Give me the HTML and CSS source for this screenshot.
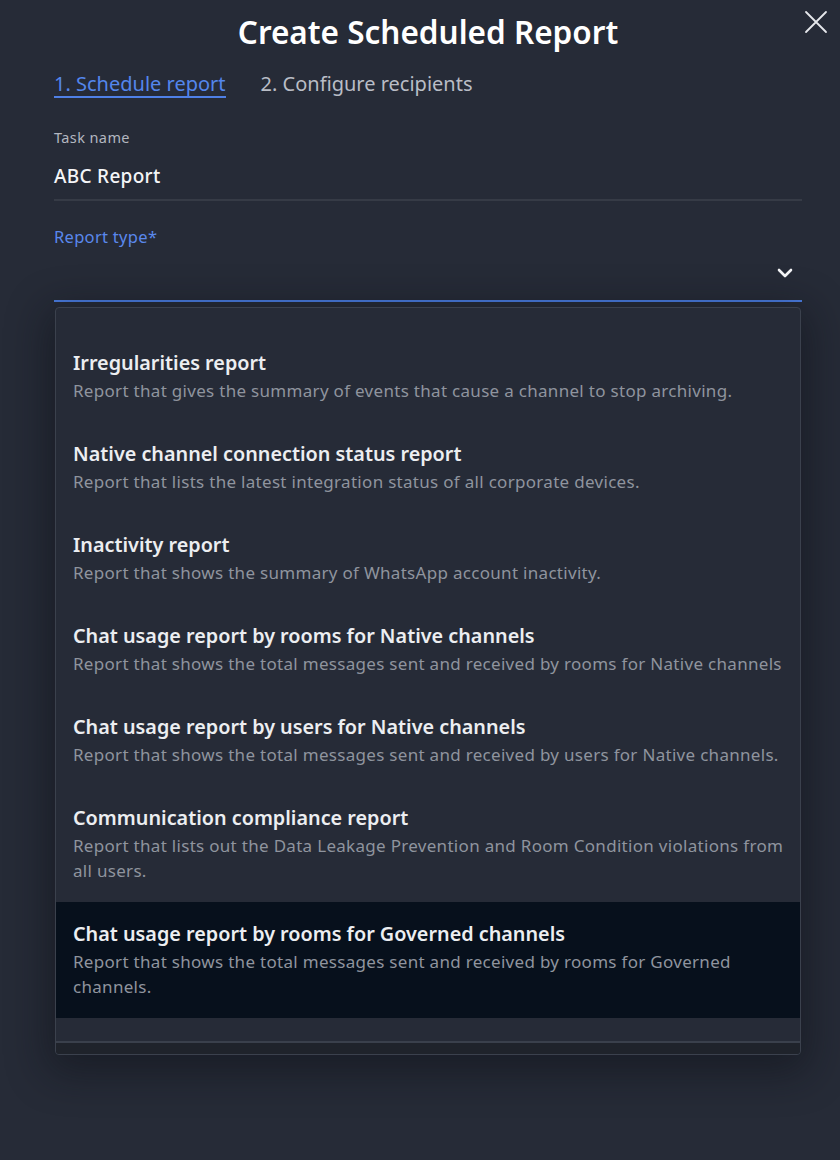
FILE: index.html
```html
<!DOCTYPE html>
<html lang="en">
<head>
<meta charset="utf-8">
<title>Create Scheduled Report</title>
<link rel="stylesheet" href="styles.css">
</head>
<body>
<div class="modal">
  <button class="close" aria-label="Close">
    <svg width="26" height="26" viewBox="0 0 26 26"><path d="M3 3 L23 23 M23 3 L3 23" stroke="#e6e8ec" stroke-width="1.8" fill="none" stroke-linecap="round"/></svg>
  </button>
  <h1 class="title">Create Scheduled Report</h1>
  <div class="tabs">
    <span class="tab active">1. Schedule report</span>
    <span class="tab">2. Configure recipients</span>
  </div>

  <div class="field">
    <div class="label">Task name</div>
    <div class="value">ABC Report</div>
  </div>

  <div class="field select">
    <div class="label blue">Report type*</div>
    <div class="select-row">
      <svg width="16" height="10" viewBox="0 0 16 10"><path d="M2 2 L8 8 L14 2" stroke="#f2f3f5" stroke-width="2.6" fill="none" stroke-linecap="round" stroke-linejoin="round"/></svg>
    </div>
  </div>

  <div class="dropdown">
    <ul class="options">
      <li class="option">
        <div class="opt-title">Irregularities report</div>
        <div class="opt-desc">Report that gives the summary of events that cause a channel to stop archiving.</div>
      </li>
      <li class="option">
        <div class="opt-title">Native channel connection status report</div>
        <div class="opt-desc">Report that lists the latest integration status of all corporate devices.</div>
      </li>
      <li class="option">
        <div class="opt-title">Inactivity report</div>
        <div class="opt-desc">Report that shows the summary of WhatsApp account inactivity.</div>
      </li>
      <li class="option">
        <div class="opt-title">Chat usage report by rooms for Native channels</div>
        <div class="opt-desc">Report that shows the total messages sent and received by rooms for Native channels</div>
      </li>
      <li class="option">
        <div class="opt-title">Chat usage report by users for Native channels</div>
        <div class="opt-desc">Report that shows the total messages sent and received by users for Native channels.</div>
      </li>
      <li class="option">
        <div class="opt-title">Communication compliance report</div>
        <div class="opt-desc">Report that lists out the Data Leakage Prevention and Room Condition violations from all users.</div>
      </li>
      <li class="option selected">
        <div class="opt-title">Chat usage report by rooms for Governed channels</div>
        <div class="opt-desc">Report that shows the total messages sent and received by rooms for Governed channels.</div>
      </li>
    </ul>
    <div class="dd-footer"></div>
  </div>
</div>
</body>
</html>
```

FILE: styles.css
```css
* { box-sizing: border-box; }
html, body {
  margin: 0;
  padding: 0;
  background: #262b37;
  font-family: "Noto Sans", "Open Sans", sans-serif;
  color: #e8e9ec;
}
.modal {
  position: relative;
  width: 840px;
  min-height: 1160px;
  padding: 12px 38px 0 54px;
}
.close {
  position: absolute;
  top: 9px;
  right: 11px;
  background: none;
  border: 0;
  padding: 0;
  width: 26px;
  height: 26px;
  cursor: pointer;
}
.close svg { display: block; }
.title {
  margin: 0;
  font-size: 31.5px;
  line-height: 40px;
  font-weight: 600;
  text-align: center;
  color: #ffffff;
}
.tabs {
  display: flex;
  gap: 35px;
  margin-top: 20px;
}
.tab {
  font-size: 20px;
  line-height: 24px;
  color: #b9bdc6;
  border-bottom: 2px solid transparent;
}
.tab.active {
  color: #5486ec;
  border-bottom-color: #4f80e6;
}
.field { margin-top: 30px; }
.label {
  font-size: 14.5px;
  line-height: 18px;
  letter-spacing: 0.4px;
  color: #b3b7c0;
}
.label.blue {
  color: #5a88ec;
  font-size: 16.5px;
  line-height: 20px;
  letter-spacing: 0.3px;
}
.value {
  margin-top: 18px;
  font-size: 19px;
  line-height: 24px;
  font-weight: 500;
  letter-spacing: 0.3px;
  color: #f4f5f7;
  padding-bottom: 11px;
  border-bottom: 2px solid #363b46;
}
.field.select { margin-top: 26px; }
.select-row {
  height: 55px;
  display: flex;
  align-items: center;
  justify-content: flex-end;
  padding-right: 9px;
  padding-bottom: 2px;
  border-bottom: 2px solid #4a7de2;
}
.select-row svg { display: block; }
.dropdown {
  margin-top: 5px;
  margin-left: 1px;
  margin-right: 1px;
  border: 1px solid #3b414d;
  border-radius: 4px;
  background: #262b37;
  box-shadow: 0 10px 40px 8px rgba(12, 14, 20, 0.45);
  overflow: hidden;
}
.options {
  list-style: none;
  margin: 0;
  padding: 23px 0 0;
}
.option {
  padding: 18px 8px 19px 17px;
}
.option.selected { background: #07101c; }
.opt-title {
  font-size: 19.8px;
  line-height: 27px;
  font-weight: 600;
  color: #eceef1;
}
.opt-desc {
  margin-top: 2px;
  font-size: 17px;
  line-height: 25px;
  letter-spacing: 0.3px;
  color: #8f949e;
}
.dd-footer {
  margin-top: 23px;
  height: 13px;
  border-top: 2px solid #3a404c;
  background: #1f232b;
}
```
